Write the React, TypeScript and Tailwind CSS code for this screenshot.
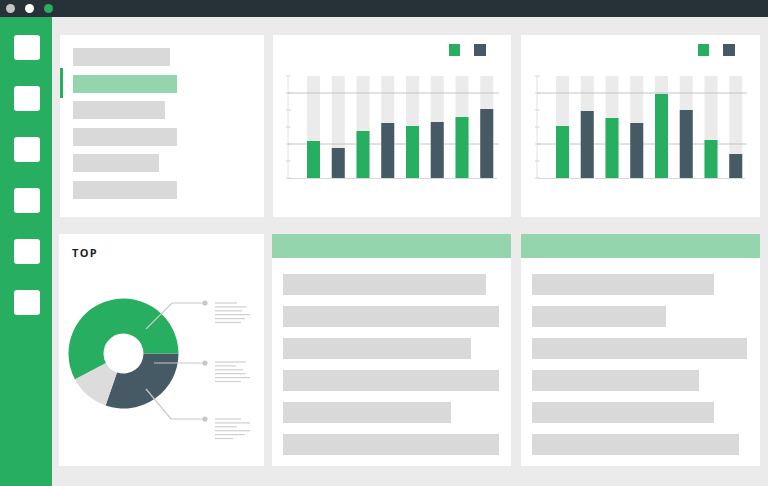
import React from "react";

const GREEN = "#27ae60";
const DARK = "#455a64";

function Legend() {
  return (
    <div className="flex h-[31px] justify-end gap-[14px] pr-[25px] pt-[9px]">
      <div className="h-[12px] w-[11px] bg-[#27ae60]" />
      <div className="h-[12px] w-[12px] bg-[#455a64]" />
    </div>
  );
}

function BarChart({ data, offset }: { data: number[]; offset: number }) {
  const ticks = [10, 27, 44, 61, 78, 95, 112];
  const ax = 15 + offset;
  return (
    <svg width="238" height="151" viewBox="0 0 238 151" className="block">
      <line x1={ax} y1={10} x2={ax} y2={112} stroke="#e2e2e2" strokeWidth="1" />
      {ticks.map((t) => (
        <line key={t} x1={ax - 2} y1={t} x2={ax + 3} y2={t} stroke="#d6d6d6" strokeWidth="1" />
      ))}
      {data.map((h, i) => {
        const x = 34 + offset + i * 24.75;
        return <rect key={"bg" + i} x={x} y={10} width={13} height={102} fill="#ebebeb" />;
      })}
      <line x1={ax} y1={27} x2={226} y2={27} stroke="#c4c4c4" strokeWidth="1" />
      <line x1={ax} y1={78} x2={226} y2={78} stroke="#c4c4c4" strokeWidth="1" />
      {data.map((h, i) => {
        const x = 34 + offset + i * 24.75;
        return (
          <rect
            key={"b" + i}
            x={x}
            y={112 - h}
            width={13}
            height={h}
            fill={i % 2 === 0 ? GREEN : DARK}
          />
        );
      })}
      <line x1={ax} y1={112.5} x2={224} y2={112.5} stroke="#d8d8d8" strokeWidth="1" />
    </svg>
  );
}

function ListCard({ widths }: { widths: number[] }) {
  return (
    <div className="flex h-[232px] flex-col bg-white">
      <div className="h-[24px] bg-[#95d5ae]" />
      <div className="flex flex-col gap-[11px] pl-[11px] pt-[16px]">
        {widths.map((w, i) => (
          <div key={i} className="h-[21px] bg-[#d9d9d9]" style={{ width: w }} />
        ))}
      </div>
    </div>
  );
}

function TextLines({ y, ends }: { y: number; ends: number[] }) {
  return (
    <>
      {ends.map((e, i) => (
        <rect key={i} x={215} y={y + i * 3.9 - 0.6} width={e - 215} height={1.2} fill="#cfcfcf" />
      ))}
    </>
  );
}

function DonutCard() {
  return (
    <div className="flex h-[232px] w-[205px] flex-col bg-white">
      <div className="h-[32px] pl-[13px] pt-[12px]">
        <div
          className="text-[11px] font-bold leading-[13px] tracking-[0.12em] text-[#1f1f1f]"
          style={{ fontFamily: "'Open Sans', 'Liberation Sans', sans-serif" }}
        >
          TOP
        </div>
      </div>
      <svg width="205" height="200" viewBox="59 266 205 200" className="block">
        <path
          d="M178.5 353.5 A55 55 0 0 1 105.59 405.5 L116.99 372.41 A20 20 0 0 0 143.5 353.5 Z"
          fill={DARK}
        />
        <path
          d="M105.59 405.5 A55 55 0 0 1 74.94 379.32 L105.84 362.89 A20 20 0 0 0 116.99 372.41 Z"
          fill="#dcdcdc"
        />
        <path
          d="M74.94 379.32 A55 55 0 1 1 178.5 353.5 L143.5 353.5 A20 20 0 1 0 105.84 362.89 Z"
          fill={GREEN}
        />
        <g stroke="#c8c8c8" strokeWidth="1.2" fill="none">
          <polyline points="146,329 172,303 205,303" />
          <polyline points="154,363 205,363" />
          <polyline points="146,389 171,419 205,419" />
        </g>
        <g fill="#c8c8c8">
          <circle cx="205" cy="303" r="2.6" />
          <circle cx="205" cy="363" r="2.6" />
          <circle cx="205" cy="419" r="2.6" />
        </g>
        <TextLines y={303} ends={[237, 247, 242, 250, 245, 241]} />
        <TextLines y={362} ends={[246, 236, 243, 246, 250, 241]} />
        <TextLines y={419} ends={[241, 250, 237, 250, 245, 233]} />
      </svg>
    </div>
  );
}

export default function App() {
  const menu = [97, 104, 92, 104, 86, 104];
  return (
    <div className="flex h-[486px] w-[768px] flex-col overflow-hidden bg-[#ebebeb]">
      <div className="flex h-[17px] items-center gap-[10px] bg-[#263238] pl-[6px]">
        <div className="h-[9px] w-[9px] rounded-full bg-[#c4c4c4]" />
        <div className="h-[9px] w-[9px] rounded-full bg-white" />
        <div className="h-[9px] w-[9px] rounded-full bg-[#27ae60]" />
      </div>
      <div className="flex flex-1">
        <div className="flex w-[52px] flex-col gap-[26px] bg-[#27ae60] pl-[14px] pt-[18px]">
          {[0, 1, 2, 3, 4, 5].map((i) => (
            <div key={i} className="h-[25px] w-[26px] rounded-[3px] bg-white" />
          ))}
        </div>
        <div className="flex flex-1 flex-col gap-[17px] pl-[8px] pt-[18px]">
          <div className="flex h-[182px]">
            <div className="relative flex w-[204px] flex-col gap-[8.5px] bg-white pl-[13px] pt-[13px]">
              <div className="absolute left-0 top-[33px] h-[30px] w-[3px] bg-[#27ae60]" />
              {menu.map((w, i) => (
                <div
                  key={i}
                  className={i === 1 ? "h-[18px] bg-[#95d5ae]" : "h-[18px] bg-[#d9d9d9]"}
                  style={{ width: w }}
                />
              ))}
            </div>
            <div className="ml-[9px] w-[238px] bg-white">
              <Legend />
              <BarChart data={[37, 30, 47, 55, 52, 56, 61, 69]} offset={0} />
            </div>
            <div className="ml-[10px] w-[239px] bg-white">
              <Legend />
              <BarChart data={[52, 67, 60, 55, 84, 68, 38, 24]} offset={1} />
            </div>
          </div>
          <div className="flex h-[232px]">
            <div className="-ml-[1px]">
              <DonutCard />
            </div>
            <div className="ml-[8px] w-[239px]">
              <ListCard widths={[203, 216, 188, 216, 168, 216]} />
            </div>
            <div className="ml-[10px] w-[239px]">
              <ListCard widths={[182, 134, 215, 167, 182, 207]} />
            </div>
          </div>
        </div>
      </div>
    </div>
  );
}
